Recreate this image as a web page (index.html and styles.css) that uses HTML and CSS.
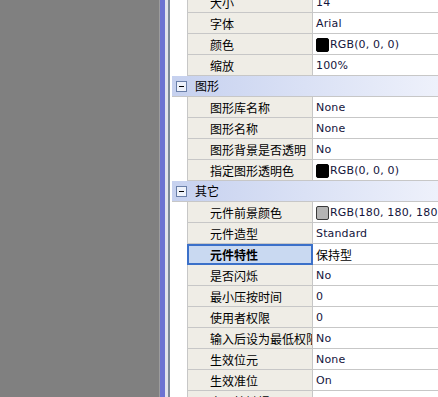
FILE: index.html
```html
<!DOCTYPE html>
<html>
<head>
<meta charset="utf-8">
<link rel="stylesheet" href="styles.css">
</head>
<body>
<div class="app">
  <div class="desk"></div>
  <div class="edge e1"></div>
  <div class="edge e2"></div>
  <div class="edge e3"></div>
  <div class="edge e4"></div>
  <div class="grid">
    <div class="rows">
      <div class="row"><div class="indent"></div><div class="label">大小</div><div class="value">14</div></div>
      <div class="row"><div class="indent"></div><div class="label">字体</div><div class="value">Arial</div></div>
      <div class="row"><div class="indent"></div><div class="label">颜色</div><div class="value"><span class="swatch black"></span>RGB(0, 0, 0)</div></div>
      <div class="row"><div class="indent"></div><div class="label">缩放</div><div class="value">100%</div></div>
      <div class="cat"><span class="toggle"></span><span class="cat-text">图形</span></div>
      <div class="row"><div class="indent"></div><div class="label">图形库名称</div><div class="value">None</div></div>
      <div class="row"><div class="indent"></div><div class="label">图形名称</div><div class="value">None</div></div>
      <div class="row"><div class="indent"></div><div class="label">图形背景是否透明</div><div class="value">No</div></div>
      <div class="row"><div class="indent"></div><div class="label">指定图形透明色</div><div class="value"><span class="swatch black"></span>RGB(0, 0, 0)</div></div>
      <div class="cat"><span class="toggle"></span><span class="cat-text">其它</span></div>
      <div class="row"><div class="indent"></div><div class="label">元件前景颜色</div><div class="value"><span class="swatch gray"></span>RGB(180, 180, 180)</div></div>
      <div class="row"><div class="indent"></div><div class="label">元件造型</div><div class="value">Standard</div></div>
      <div class="row sel"><div class="indent"></div><div class="label">元件特性</div><div class="value cjk">保持型</div></div>
      <div class="row"><div class="indent"></div><div class="label">是否闪烁</div><div class="value">No</div></div>
      <div class="row"><div class="indent"></div><div class="label">最小压按时间</div><div class="value">0</div></div>
      <div class="row"><div class="indent"></div><div class="label">使用者权限</div><div class="value">0</div></div>
      <div class="row"><div class="indent"></div><div class="label">输入后设为最低权限</div><div class="value">No</div></div>
      <div class="row"><div class="indent"></div><div class="label">生效位元</div><div class="value">None</div></div>
      <div class="row"><div class="indent"></div><div class="label">生效准位</div><div class="value">On</div></div>
      <div class="row"><div class="indent"></div><div class="label">启用按键提示</div><div class="value"></div></div>
    </div>
  </div>
</div>
</body>
</html>
```
FILE: styles.css
```css
html, body {
  margin: 0;
  padding: 0;
  background: #808080;
}
.app {
  display: flex;
  width: 438px;
  height: 397px;
  overflow: hidden;
}
.desk {
  width: 159px;
  background: #808080;
  flex: none;
}
.edge { flex: none; }
.e1 { width: 1px; background: #9c9c9c; }
.e2 { width: 5px; background: #6c72d2; }
.e3 { width: 3px; background: #e2e3ec; }
.e4 { width: 2px; background: #7f8a98; }
.grid {
  flex: 1;
  background: #ffffff;
  overflow: hidden;
}
.rows {
  margin-top: -8px;
}
.row {
  display: flex;
  height: 21px;
}
.indent {
  width: 17px;
  flex: none;
  background: #ffffff;
}
.label {
  box-sizing: border-box;
  width: 126px;
  flex: none;
  height: 21px;
  border-left: 1px solid #c7c7c7;
  border-right: 1px solid #c7c7c7;
  border-bottom: 1px solid #c7c7c7;
  background: #efede6;
  padding-left: 22px;
  padding-top: 1px;
  font: 12px/19px "Noto Sans CJK SC", sans-serif;
  color: #000;
  white-space: nowrap;
  overflow: hidden;
}
.value {
  flex: 1;
  box-sizing: border-box;
  height: 21px;
  border-bottom: 1px solid #c7c7c7;
  padding-left: 3px;
  padding-top: 2px;
  font: 11px/18px "DejaVu Sans", sans-serif;
  letter-spacing: 0.15px;
  color: #14143c;
  white-space: nowrap;
  overflow: hidden;
  display: flex;
  align-items: center;
}
.value.cjk {
  font: 12px/18px "Noto Sans CJK SC", sans-serif;
  letter-spacing: 0;
  padding-top: 1px;
  color: #000;
}
.swatch {
  box-sizing: border-box;
  width: 13px;
  height: 14px;
  border-radius: 2px;
  margin-right: 1px;
  margin-top: -1px;
  flex: none;
}
.swatch.black {
  background: #000;
  border: 1px solid #000;
}
.swatch.gray {
  background: #b4b4b4;
  border: 1px solid #3a3a3a;
}
.sel .label {
  background: #c9d9f1;
  border: 2px solid #3b70c9;
  padding-left: 21px;
  padding-top: 0;
  font-weight: bold;
  line-height: 17px;
}
.cat {
  box-sizing: border-box;
  height: 21px;
  margin-left: 2px;
  border-bottom: 1px solid #c7c7c7;
  background: linear-gradient(to right, #c6d1ef, #eef1fb);
  display: flex;
  align-items: center;
  font: 12px/20px "Noto Sans CJK SC", sans-serif;
  color: #000;
}
.toggle {
  box-sizing: border-box;
  width: 11px;
  height: 11px;
  margin-left: 4px;
  border: 1px solid #6a7fa8;
  background: #eef2fb;
  position: relative;
  flex: none;
}
.toggle::after {
  content: "";
  position: absolute;
  left: 2px;
  top: 4px;
  width: 5px;
  height: 1px;
  background: #000;
}
.cat-text {
  margin-left: 8px;
}
```
